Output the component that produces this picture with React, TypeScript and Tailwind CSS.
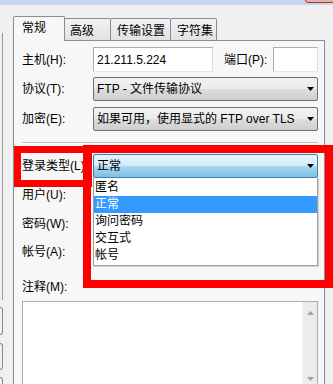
import React from "react";

const Arrow = ({ color = "#000", up = false }: { color?: string; up?: boolean }) => (
  <svg width="7" height="4" viewBox="0 0 7 4" className="block">
    <polygon points={up ? "0,4 7,4 3.5,0" : "0,0 7,0 3.5,4"} fill={color} />
  </svg>
);

const Combo = ({ text, blue = false }: { text: string; blue?: boolean }) => (
  <div
    className={
      blue
        ? "relative flex-1 h-[24px] rounded-[2px] border border-[#3c7fb1] bg-[linear-gradient(#e5f4fc_0%,#d3ecf9_50%,#a9d9f2_50%,#7fc0e4_100%)] flex items-center pl-[3px]"
        : "relative flex-1 h-[24px] rounded-[2px] border border-[#707070] bg-[linear-gradient(#f2f2f2_0%,#ebebeb_50%,#dddddd_50%,#cfcfcf_100%)] flex items-center pl-[3px]"
    }
  >
    <span className="leading-[14px] whitespace-nowrap">{text}</span>
    <div className="absolute right-[3px] top-[9px]">
      <Arrow />
    </div>
  </div>
);

const TextInput = ({ className = "", value = "" }: { className?: string; value?: string }) => (
  <div
    className={
      "h-[25px] bg-white border border-[#abadb3] border-r-[#dbdfe6] border-b-[#e3e9ef] flex items-center pl-[3px] " +
      className
    }
  >
    <span className="leading-[14px]">{value}</span>
  </div>
);

const Label = ({ children, className = "" }: { children: React.ReactNode; className?: string }) => (
  <div className={"w-[71px] shrink-0 leading-[14px] whitespace-nowrap " + className}>{children}</div>
);

export default function App() {
  const items = ["匿名", "正常", "询问密码", "交互式", "帐号"];
  return (
    <div className="relative w-[333px] h-[384px] overflow-hidden bg-[#f0f0f0] text-[12px] text-black [font-family:'Liberation_Sans','Noto_Sans_CJK_SC',sans-serif]">
      {/* title bar remnant */}
      <div className="h-[5px] bg-[#c4d7ec]" />
      <div className="absolute left-[305px] top-[-10px] w-[30px] h-[13px] rounded-b-[3px] border border-[#9e3a32] bg-[#e9b3ad]" />

      <div className="flex">
        {/* left panel edge */}
        <div className="w-[13px] shrink-0 flex flex-col pt-[28px]">
          <div className="h-[267px] w-[3px] border-r border-[#9a9a9a]" />
          <div className="mt-[7px] h-[28px] w-[3px] border border-l-0 rounded-r-[3px] border-[#8a8a8a]" />
          <div className="mt-[8px] h-[27px] w-[3px] border border-l-0 rounded-r-[3px] border-[#8a8a8a]" />
          <div className="mt-[7px] h-[20px] w-[3px] border border-l-0 rounded-r-[3px] border-[#8a8a8a]" />
        </div>

        {/* tab control */}
        <div className="w-[312px] shrink-0 pt-[11px]">
          <div className="relative z-10 flex items-end h-[25px] -mb-px">
            <div className="h-[25px] w-[52px] border border-b-0 border-[#898c95] bg-[#f7f7f7] rounded-t-[2px] pl-[8px] pt-[4px] leading-[14px]">
              常规
            </div>
            <div className="-ml-px h-[23px] w-[47px] border border-[#898c95] bg-[linear-gradient(#f3f3f3,#e2e2e2)] rounded-t-[2px] pl-[5px] pt-[5px] leading-[14px]">
              高级
            </div>
            <div className="-ml-px h-[23px] w-[61px] border border-[#898c95] bg-[linear-gradient(#f3f3f3,#e2e2e2)] rounded-t-[2px] pl-[6px] pt-[5px] leading-[14px]">
              传输设置
            </div>
            <div className="-ml-px h-[23px] w-[47px] border border-[#898c95] bg-[linear-gradient(#f3f3f3,#e2e2e2)] rounded-t-[2px] pl-[6px] pt-[5px] leading-[14px]">
              字符集
            </div>
          </div>

          <div className="h-[400px] border border-[#898c95] bg-[#f7f7f7] pl-[8px] pr-[6px] pt-[6px] flex flex-col">
            {/* host */}
            <div className="flex items-center h-[25px]">
              <Label>主机(H):</Label>
              <TextInput className="w-[120px]" value="21.211.5.224" />
              <div className="ml-[11px] flex-1 leading-[14px] whitespace-nowrap">端口(P):</div>
              <TextInput className="w-[45px]" />
            </div>
            {/* protocol */}
            <div className="mt-[5px] flex items-center h-[24px]">
              <Label>协议(T):</Label>
              <Combo text="FTP - 文件传输协议" />
            </div>
            {/* encryption */}
            <div className="mt-[6px] flex items-center h-[24px]">
              <Label>加密(E):</Label>
              <Combo text="如果可用，使用显式的 FTP over TLS" />
            </div>
            {/* separator */}
            <div className="mt-[11px] border-t border-[#bcbcbc] border-b border-b-white" />
            {/* logon type */}
            <div className="mt-[10px] flex items-center h-[24px]">
              <Label>登录类型(L)</Label>
              <div className="relative flex-1 flex">
                <Combo text="正常" blue />
                <div className="absolute z-20 left-0 right-0 top-full bg-white border border-t-0 border-[#a0a0a0] pt-[1px] pb-[1px] shadow-[1px_1px_1px_rgba(0,0,0,0.15)]">
                  {items.map((it) => (
                    <div
                      key={it}
                      className={
                        "h-[17px] leading-[17px] pl-[1px] " +
                        (it === "正常" ? "bg-[#3399ff] text-white" : "")
                      }
                    >
                      {it}
                    </div>
                  ))}
                </div>
              </div>
            </div>
            {/* user */}
            <div className="mt-[5px] flex items-center h-[24px]">
              <Label>用户(U):</Label>
              <TextInput className="flex-1" />
            </div>
            <div className="mt-[5px] flex items-center h-[24px]">
              <Label>密码(W):</Label>
              <TextInput className="flex-1" />
            </div>
            <div className="mt-[4px] flex items-center h-[24px]">
              <Label>帐号(A):</Label>
              <TextInput className="flex-1" />
            </div>
            {/* comments */}
            <div className="mt-[16px] leading-[14px]">注释(M):</div>
            <div className="mt-[7px] h-[86px] bg-white border border-[#abadb3] flex justify-end">
              <div className="w-[15px] h-full bg-[#ececec] border-l border-[#f6f6f6] flex flex-col items-center justify-between pt-[9px] pb-[5px]">
                <Arrow color="#a0a0a0" up />
                <Arrow color="#a0a0a0" />
              </div>
            </div>
          </div>
        </div>
      </div>

      {/* red annotation boxes */}
      <div className="absolute left-[14px] top-[146px] w-[78px] h-[41px] border-[7px] border-[#ff0000] z-30" />
      <div className="absolute left-[83px] top-[145px] w-[250px] h-[143px] border-[8px] border-[#ff0000] z-30" />
    </div>
  );
}
